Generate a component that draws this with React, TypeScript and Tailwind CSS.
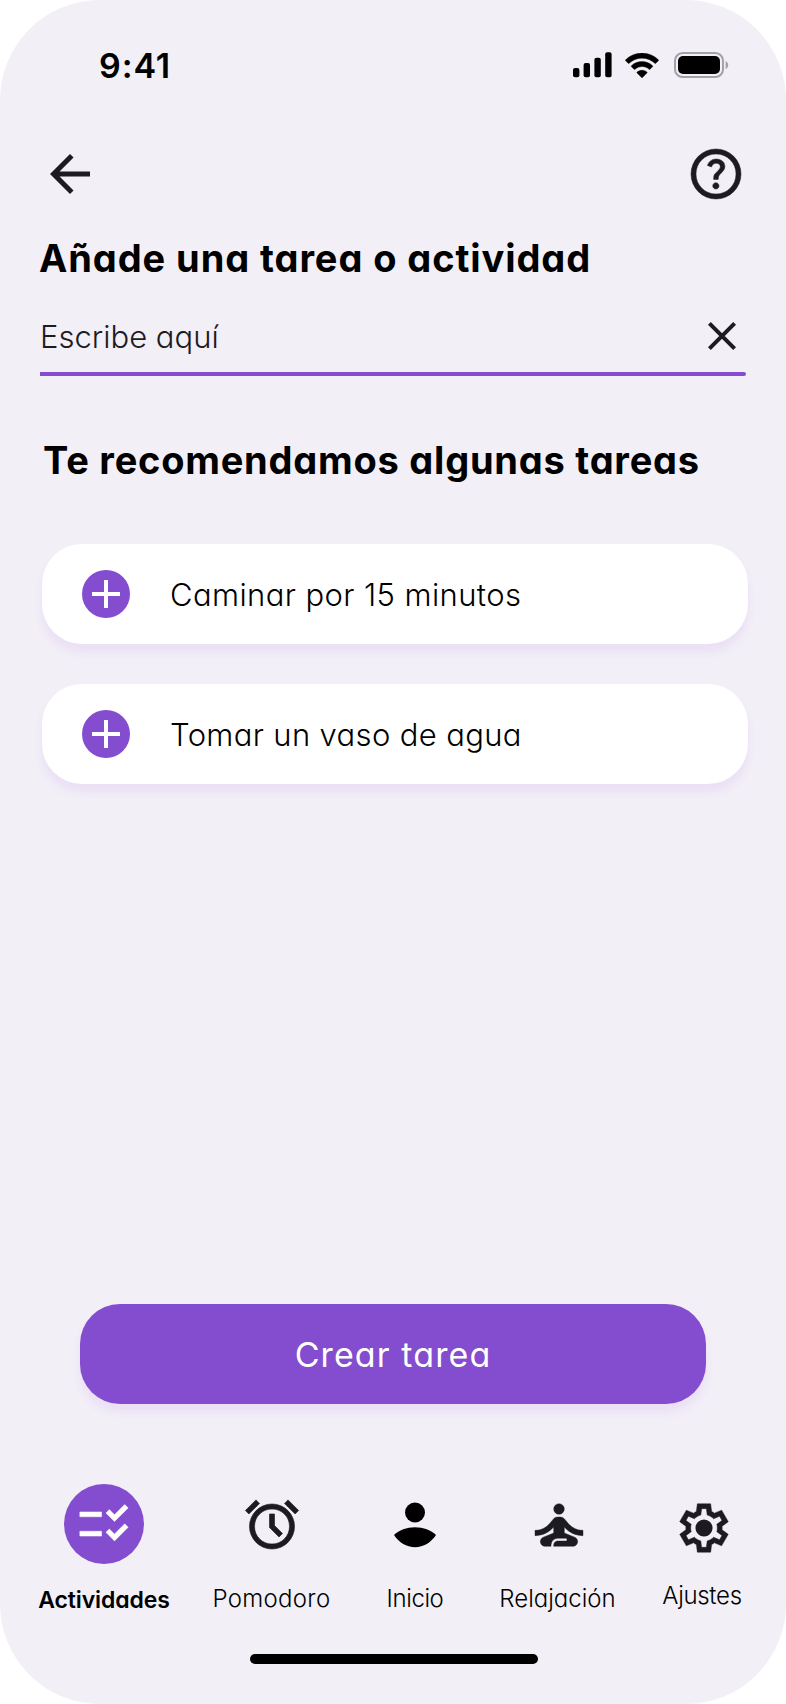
import type { ReactNode } from "react";

function SignalIcon() {
  return (
    <svg width="39" height="26" viewBox="0 0 39 26" fill="#000">
      <rect x="0" y="16" width="6.4" height="9.3" rx="2" />
      <rect x="10.6" y="11" width="6.4" height="14.3" rx="2" />
      <rect x="21.4" y="5.8" width="6.4" height="19.5" rx="2" />
      <rect x="32.2" y="0.2" width="6.4" height="25.1" rx="2" />
    </svg>
  );
}

function WifiIcon() {
  return (
    <svg width="34" height="25" viewBox="0 0 34 25" fill="#000" stroke="#000" strokeWidth="0.4">
      <path d="M17 5.2c4.8 0 9.4 1.8 12.9 5.1.26.25.68.25.94 0l2.5-2.55a.7.7 0 0 0 0-1C24.2-2.1 9.8-2.1.67 6.75a.7.7 0 0 0 0 1l2.5 2.55c.26.25.68.25.94 0C7.6 7 12.2 5.2 17 5.2Z" />
      <path d="M17 13.5c2.6 0 5.15.98 7.1 2.74.26.25.68.24.94-.01l2.5-2.55a.7.7 0 0 0-.01-1C21.6 7.1 12.4 7.1 6.48 12.68a.7.7 0 0 0-.01 1l2.5 2.55c.26.25.67.26.94.01A10.6 10.6 0 0 1 17 13.5Z" />
      <path d="M21.9 19.1a.7.7 0 0 1-.02 1l-4.4 4.45a.67.67 0 0 1-.96 0l-4.4-4.45a.7.7 0 0 1-.02-1c2.8-2.4 7-2.4 9.8 0Z" />
    </svg>
  );
}

function BatteryIcon() {
  return (
    <svg width="55" height="26" viewBox="0 0 55 26">
      <rect x="1" y="1" width="48" height="24" rx="7.6" fill="none" stroke="#a3a1a8" strokeWidth="2" />
      <rect x="4" y="4" width="42" height="18" rx="5" fill="#000" />
      <path d="M51.6 9v8.2c1.6-.7 2.6-2.3 2.6-4.1s-1-3.4-2.6-4.1Z" fill="#a3a1a8" />
    </svg>
  );
}

function BackIcon() {
  return (
    <svg width="60" height="60" viewBox="0 0 24 24" fill="#1c1b1f">
      <path d="M20 11H7.83l5.59-5.59L12 4l-8 8 8 8 1.41-1.41L7.83 13H20v-2z" />
    </svg>
  );
}

function HelpIcon() {
  return (
    <svg width="60" height="60" viewBox="0 -960 960 960" fill="#1c1b1f">
      <path
        stroke="#1c1b1f"
        strokeWidth="8"
        d="M478-240q21 0 35.5-14.5T528-290q0-21-14.5-35.5T478-340q-21 0-35.5 14.5T428-290q0 21 14.5 35.5T478-240Zm-36-154h74q0-33 7.5-52t42.5-52q26-26 41-49.5t15-56.5q0-56-41-86t-97-30q-57 0-92.5 30T342-618l66 26q5-18 22.5-39t53.5-21q32 0 48 17.5t16 38.5q0 20-12 37.5T506-526q-44 39-54 59t-10 73Zm38 314q-83 0-156-31.5T197-197q-54-54-85.5-127T80-480q0-83 31.5-156T197-763q54-54 127-85.5T480-880q83 0 156 31.5T763-763q54 54 85.5 127T880-480q0 83-31.5 156T763-197q-54 54-127 85.5T480-80Zm0-80q134 0 227-93t93-227q0-134-93-227t-227-93q-134 0-227 93t-93 227q0 134 93 227t227 93Z"
      />
    </svg>
  );
}

function CloseIcon() {
  return (
    <svg width="30" height="30" viewBox="0 0 30 30" stroke="#1c1b1f" strokeWidth="4">
      <path d="M2.4 2.4l25.2 25.2M27.6 2.4L2.4 27.6" />
    </svg>
  );
}

function PlusIcon() {
  return (
    <svg width="28" height="28" viewBox="0 0 28 28" fill="#fff">
      <path d="M12 0h4v12h12v4H16v12h-4V16H0v-4h12z" />
    </svg>
  );
}

function ChecklistIcon() {
  return (
    <svg width="58" height="58" viewBox="0 0 24 24" fill="#fff" stroke="#fff" strokeWidth="0.2">
      <path d="M11 7H2v2h9V7zm0 8H2v2h9v-2zm5.34-4l-3.54-3.54 1.41-1.41 2.12 2.12 4.24-4.24L22 5.34 16.34 11zm0 8l-3.54-3.54 1.41-1.41 2.12 2.12 4.24-4.24L22 13.34 16.34 19z" />
    </svg>
  );
}

function AlarmIcon() {
  return (
    <svg width="60" height="60" viewBox="0 -960 960 960" fill="#1c1b1f" stroke="#1c1b1f" strokeWidth="10">
      <path
        fillRule="evenodd"
        d="M480-80q-75 0-140.5-28.5t-114-77q-48.5-48.5-77-114T120-440q0-75 28.5-140.5t77-114q48.5-48.5 114-77T480-800q75 0 140.5 28.5t114 77q48.5 48.5 77 114T840-440q0 75-28.5 140.5t-77 114q-48.5 48.5-114 77T480-80Zm112-192 56-56-128-128v-184h-80v216l152 152ZM224-866l56 56-170 170-56-56 170-170Zm512 0 170 170-56 56-170-170 56-56ZM480-160q117 0 198.500-81.5T760-440q0-117-81.5-198.5T480-720q-117 0-198.5 81.5T200-440q0 117 81.5 198.5T480-160Z"
      />
    </svg>
  );
}

function PersonIcon() {
  return (
    <svg width="60" height="60" viewBox="0 0 60 60" fill="#000">
      <circle cx="30" cy="18.5" r="10" />
      <path d="M9 41C14 36 21.5 33.2 30 33.2S46 36 51 41C46 48.5 38.5 53.2 30 53.2S14 48.5 9 41Z" />
    </svg>
  );
}

function MeditationIcon() {
  return (
    <svg width="64" height="64" viewBox="0 0 24 24" fill="#1c1b1f" stroke="#1c1b1f" strokeWidth="0.15">
      <circle cx="12" cy="6" r="2" />
      <path d="M21 16v-2c-2.24 0-4.16-.96-5.6-2.68l-1.34-1.6A1.98 1.98 0 0 0 12.53 9h-1.05c-.61 0-1.17.26-1.55.72l-1.34 1.6C7.16 13.04 5.24 14 3 14v2c2.77 0 5.19-1.17 7-3.25V15l-3.88 1.55c-.67.27-1.12.93-1.12 1.66C5 19.2 5.8 20 6.79 20H9v-.5a2.5 2.5 0 0 1 2.5-2.5h3c.28 0 .5.22.5.5s-.22.5-.5.5h-3c-.83 0-1.5.67-1.5 1.5v.5h7.21c.99 0 1.79-.8 1.79-1.79 0-.73-.45-1.39-1.12-1.66L14 15v-2.25c1.81 2.08 4.23 3.25 7 3.25z" />
    </svg>
  );
}

function GearIcon() {
  return (
    <svg width="58" height="58" viewBox="0 -960 960 960" fill="#1c1b1f">
      <path
        stroke="#1c1b1f"
        strokeWidth="8"
        d="m370-80-16-128q-13-5-24.5-12T307-235l-119 50L78-375l103-78q-1-7-1-13.5v-27q0-6.5 1-13.5L78-585l110-190 119 50q11-8 23-15t24-12l16-128h220l16 128q13 5 24.5 12t22.5 15l119-50 110 190-103 78q1 7 1 13.5v27q0 6.5-2 13.5l103 78-110 190-118-50q-11 8-23 15t-24 12L590-80H370Zm70-80h79l14-106q31-8 57.5-23.5T639-327l99 41 39-68-86-65q5-14 7-29.5t2-31.5q0-16-2-31.5t-7-29.5l86-65-39-68-99 42q-22-23-48.5-38.5T533-694l-13-106h-79l-14 106q-31 8-57.5 23.5T321-633l-99-41-39 68 86 64q-5 15-7 30t-2 32q0 16 2 31t7 30l-86 65 39 68 99-42q22 23 48.5 38.5T427-266l13 106Z"
      />
      <circle cx="480" cy="-480" r="142" />
    </svg>
  );
}

function TaskCard({ children }: { children: ReactNode }) {
  return (
    <li className="flex h-[100px] items-center rounded-[40px] bg-white pl-10 shadow-[0_8px_8px_rgba(170,80,225,0.09)]">
      <span className="flex size-12 items-center justify-center rounded-full bg-[#844cce]">
        <PlusIcon />
      </span>
      <span className="ml-10 pt-px text-[31px] leading-10 font-light">{children}</span>
    </li>
  );
}

function NavItem({ icon, label, iconClass = "", labelClass = "" }: {
  icon: ReactNode;
  label: string;
  iconClass?: string;
  labelClass?: string;
}) {
  return (
    <a className="flex flex-col items-center">
      <span className={`flex size-20 items-center justify-center ${iconClass}`}>{icon}</span>
      <span className={`leading-[30px] whitespace-nowrap ${labelClass}`}>{label}</span>
    </a>
  );
}

export default function App() {
  return (
    <div className="h-[1704px] w-[786px] bg-white">
      <main className="flex h-full flex-col rounded-[100px] bg-[#f2eff7] font-['Inter',sans-serif] text-black [font-feature-settings:'cv11']">
        <div className="flex h-[132px] items-center justify-between pr-[57px] pl-[99px]">
          <span className="text-[34px] leading-10 font-semibold tracking-[0.9px]">9:41</span>
          <div className="mb-0.5 flex items-center">
            <SignalIcon />
            <span className="ml-[13px]"><WifiIcon /></span>
            <span className="ml-[15px]"><BatteryIcon /></span>
          </div>
        </div>

        <header className="mt-3 flex justify-between px-10">
          <BackIcon />
          <HelpIcon />
        </header>

        <h1 className="mt-[30px] pl-[39px] text-[38px] leading-[48px] font-bold tracking-[0.92px]">
          Añade una tarea o actividad
        </h1>

        <div className="mx-10 mt-[18px] flex h-[72px] items-center justify-between pr-[9px]">
          <span className="pt-0.5 text-[31px] leading-10 font-light text-[#1c1b1f]">Escribe aquí</span>
          <CloseIcon />
        </div>
        <div className="mx-10 h-1 rounded-r-full bg-[#844cce]" />

        <h2 className="mt-[60px] pl-[43px] text-[38px] leading-[48px] font-bold tracking-[0.77px]">
          Te recomendamos algunas tareas
        </h2>

        <ul className="mt-[60px] mr-[38px] ml-[42px] flex flex-col gap-10">
          <TaskCard><span className="tracking-[0.4px]">Caminar por 15 minutos</span></TaskCard>
          <TaskCard><span className="tracking-[0.35px]">Tomar un vaso de agua</span></TaskCard>
        </ul>

        <button className="mx-20 mt-[520px] h-[100px] rounded-[40px] bg-[#844cce] pt-px text-[34px] tracking-[1.1px] text-white shadow-[0_8px_8px_rgba(170,80,225,0.09)]">
          Crear tarea
        </button>

        <nav className="mt-20 ml-5 grid h-[130px] grid-cols-[168px_167px_120px_167px_122px]">
          <NavItem
            icon={<ChecklistIcon />}
            label="Actividades"
            iconClass="rounded-full bg-[#844cce]"
            labelClass="mt-[21px] text-[23px] font-semibold tracking-[-0.1px]"
          />
          <NavItem icon={<AlarmIcon />} label="Pomodoro" labelClass="mt-5 text-2xl font-light tracking-[0.3px]" />
          <NavItem icon={<PersonIcon />} label="Inicio" labelClass="mt-5 text-2xl font-light tracking-[-0.4px]" />
          <NavItem icon={<MeditationIcon />} label="Relajación" iconClass="pt-0.5" labelClass="mt-5 pr-0.5 text-2xl font-light" />
          <NavItem icon={<GearIcon />} label="Ajustes" iconClass="pt-2 pl-0.5" labelClass="mt-[17px] pr-0.5 text-2xl font-light tracking-[-0.3px]" />
        </nav>

        <div className="mt-10 ml-[250px] h-2.5 w-[288px] rounded-full bg-black" />
      </main>
    </div>
  );
}
